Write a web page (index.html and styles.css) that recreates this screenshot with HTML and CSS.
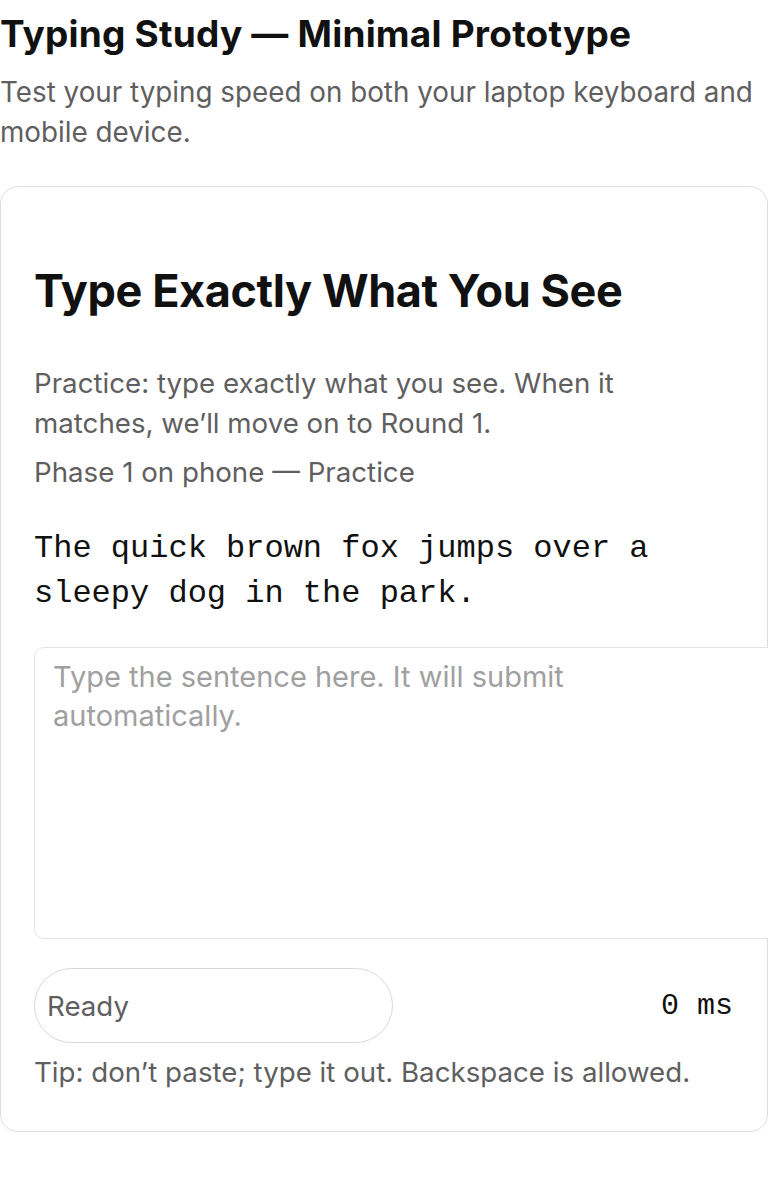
FILE: index.html
```html
<!DOCTYPE html>
<html lang="en">
<head>
    <meta charset="UTF-8">
    <meta name="viewport" content="width=device-width, initial-scale=1.0">
    <title>Typing Study — Minimal Prototype</title>
    <link rel="stylesheet" href="styles.css">
</head>
<body>

<!-- Intro -->
<header class="intro">
    <h1>Typing Study — Minimal Prototype</h1>
    <p>Test your typing speed on both your laptop keyboard and mobile device.</p>
</header>

<!-- Typing card -->
<main class="card">
    <h2>Type Exactly What You See</h2>
    <p class="instructions">Practice: type exactly what you see. When it matches, we’ll move on to Round 1.</p>
    <p class="phase">Phase 1 on phone — Practice</p>

    <div class="target">The quick brown fox jumps over a sleepy dog in the park.</div>

    <textarea id="entry" placeholder="Type the sentence here. It will submit automatically."></textarea>

    <div class="status-row">
        <div class="status" id="status">Ready</div>
        <div class="timer" id="timer">0 ms</div>
    </div>

    <p class="tip">Tip: don’t paste; type it out. Backspace is allowed.</p>
</main>

</body>
</html>
```

FILE: styles.css
```css
* {
    margin: 0;
    padding: 0;
    box-sizing: border-box;
}

body {
    font-family: Inter, "Noto Sans", sans-serif;
    background-color: #fff;
    color: #111;
}

.intro h1 {
    margin-top: 13px;
    font-size: 37px;
    font-weight: 700;
    line-height: 42px;
    letter-spacing: 0.2px;
}

.intro p {
    margin-top: 17px;
    font-size: 27.8px;
    line-height: 40px;
    color: #5f5f5f;
}

.card {
    margin-top: 34px;
    padding: 0 34px 39px 33px;
    border: 1px solid #dcdcdc;
    border-radius: 18px;
}

.card h2 {
    margin-top: 76px;
    font-size: 45px;
    font-weight: 700;
    line-height: 55px;
    letter-spacing: -0.4px;
}

.instructions {
    max-width: 640px;
    margin-top: 45px;
    font-size: 27.7px;
    line-height: 40px;
    color: #5f5f5f;
}

.phase {
    margin-top: 9px;
    font-size: 27.7px;
    line-height: 40px;
    color: #5f5f5f;
}

.target {
    margin-top: 34px;
    font-family: "Liberation Mono", monospace;
    font-size: 32px;
    line-height: 45px;
    color: #111;
}

textarea {
    display: block;
    box-sizing: content-box;
    width: 100%;
    height: 263px;
    margin-top: 31px;
    padding: 9px 40px 18px 18px;
    font-family: Inter, "Noto Sans", sans-serif;
    font-size: 29px;
    line-height: 39px;
    border: 1px solid #e4e4e4;
    border-radius: 10px;
    resize: none;
    outline: none;
}

textarea::placeholder {
    color: #a0a0a0;
}

.status-row {
    display: flex;
    justify-content: space-between;
    align-items: center;
    margin-top: 29px;
}

.status {
    width: 359px;
    height: 75px;
    padding: 0 12px;
    display: flex;
    align-items: center;
    font-size: 27.7px;
    color: #5f5f5f;
    border: 1.5px solid #d8d8d8;
    border-radius: 38px;
}

.timer {
    font-family: "Liberation Mono", monospace;
    font-size: 30px;
    color: #111;
}

.tip {
    margin-top: 9px;
    font-size: 27.7px;
    line-height: 40px;
    color: #5f5f5f;
}
```
